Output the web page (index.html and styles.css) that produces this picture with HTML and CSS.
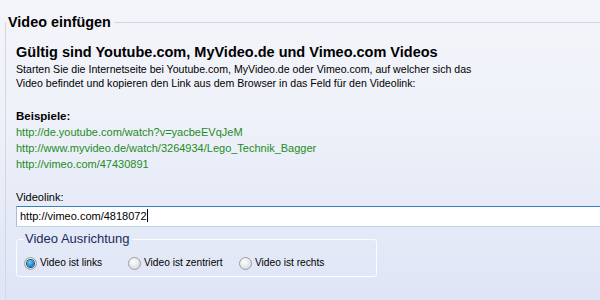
FILE: index.html
```html
<!DOCTYPE html>
<html lang="de">
<head>
<meta charset="utf-8">
<link rel="stylesheet" href="styles.css">
</head>
<body>
<div class="page">
  <fieldset class="group">
    <legend class="group-title">Video einfügen</legend>
    <h1 class="headline">Gültig sind Youtube.com, MyVideo.de und Vimeo.com Videos</h1>
    <p class="intro">Starten Sie die Internetseite bei Youtube.com, MyVideo.de oder Vimeo.com, auf welcher sich das<br>Video befindet und kopieren den Link aus dem Browser in das Feld für den Videolink:</p>
    <p class="examples-title">Beispiele:</p>
    <ul class="examples">
      <li>http://de.youtube.com/watch?v=yacbeEVqJeM</li>
      <li>http://www.myvideo.de/watch/3264934/Lego_Technik_Bagger</li>
      <li>http://vimeo.com/47430891</li>
    </ul>
    <div class="field-label">Videolink:</div>
    <div class="input">http://vimeo.com/4818072<span class="caret"></span></div>
    <fieldset class="align">
      <legend class="align-title">Video Ausrichtung</legend>
      <div class="radios">
        <label class="radio r-left"><span class="dot checked"></span>Video ist links</label>
        <label class="radio r-center"><span class="dot"></span>Video ist zentriert</label>
        <label class="radio r-right"><span class="dot"></span>Video ist rechts</label>
      </div>
    </fieldset>
  </fieldset>
</div>
</body>
</html>
```

FILE: styles.css
```css
html, body {
  margin: 0;
  padding: 0;
}
body {
  width: 600px;
  height: 300px;
  overflow: hidden;
  font-family: "Liberation Sans", Arial, sans-serif;
  font-size: 11px;
  color: #000;
  background: linear-gradient(180deg, #f4f5fa 0%, #eef1f9 40%, #dfe5f6 100%);
}
.page {
  padding-top: 14px;
}
.group {
  margin: 0 -10px 0 5px;
  padding: 0 10px 22px 10px;
  border: 1px solid #d4d7df;
  border-right: none;
  border-bottom: none;
  min-width: 0;
}
.group-title {
  padding: 0 3px 0 2px;
  margin-left: -10px;
  font-size: 14.4px;
  line-height: 16px;
  font-weight: bold;
  color: #000;
}
.headline {
  margin: 14px 0 0 0;
  font-size: 14.5px;
  font-weight: bold;
  line-height: 17px;
}
.intro {
  margin: 1px 0 0 0;
  font-size: 10.6px;
  line-height: 14px;
}
.examples-title {
  margin: 19px 0 0 0;
  font-weight: bold;
  font-size: 11.5px;
  line-height: 15px;
}
.examples {
  list-style: none;
  margin: 0;
  padding: 0;
  color: #1e8c1e;
}
.examples li {
  line-height: 16px;
  height: 16px;
}
.field-label {
  margin-top: 18px;
  line-height: 14px;
}
.input {
  margin-top: 2px;
  height: 19px;
  line-height: 19px;
  padding-left: 3px;
  background: #fff;
  border-top: 1px solid #3c7fc1;
  border-bottom: 1px solid #b7d4f0;
  border-left: 1px solid #a9bdd8;
  font-size: 11px;
}
.caret {
  display: inline-block;
  width: 1px;
  height: 13px;
  background: #000;
  vertical-align: -2px;
}
.align {
  width: 345px;
  margin: 4px 0 0 0;
  padding: 9px 7px 6px 7px;
  border: 1px solid #fbfcff;
  border-radius: 3px;
}
.align-title {
  padding: 0 2px 0 1px;
  font-size: 13px;
  line-height: 16px;
  color: #1b2a62;
}
.radios {
  display: flex;
}
.radio {
  display: flex;
  align-items: center;
  gap: 3px;
  font-size: 10.2px;
  line-height: 14px;
}
.r-left {
  width: 104px;
}
.r-center {
  width: 111px;
}
.dot {
  width: 11px;
  height: 11px;
  border-radius: 50%;
  border: 1px solid #9aa0a8;
  background: radial-gradient(circle at 40% 35%, #ffffff 0%, #e6e8ec 50%, #c9cdd3 100%);
  display: flex;
  align-items: center;
  justify-content: center;
}
.dot.checked::after {
  content: "";
  width: 7px;
  height: 7px;
  border-radius: 50%;
  background: radial-gradient(circle at 40% 35%, #6fd0ff 0%, #1a8fd8 55%, #0b4f86 100%);
  box-shadow: 0 0 0 1px #2a4a6a;
}
```
